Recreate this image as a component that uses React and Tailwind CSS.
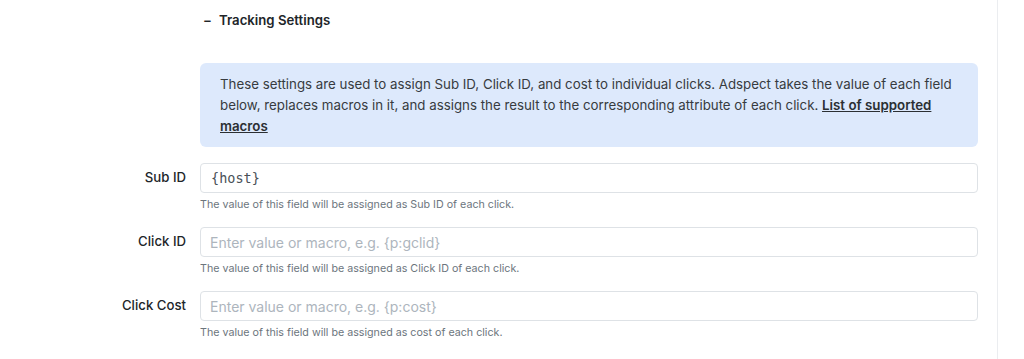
export default function App() {
  const font = { fontFamily: "Inter, 'Noto Sans', sans-serif" };
  const rows = [
    { label: "Sub ID", value: "{host}", placeholder: "", help: "The value of this field will be assigned as Sub ID of each click." },
    { label: "Click ID", value: "", placeholder: "Enter value or macro, e.g. {p:gclid}", help: "The value of this field will be assigned as Click ID of each click." },
    { label: "Click Cost", value: "", placeholder: "Enter value or macro, e.g. {p:cost}", help: "The value of this field will be assigned as cost of each click." },
  ];
  return (
    <div className="w-[1024px] h-[359px] bg-white flex overflow-hidden" style={font}>
      <div className="w-[998px] border-r border-[#ebedf0] pt-[11px]">
        <div className="pl-[203px] flex items-center h-[20px] text-[13.2px] font-semibold text-[#212529]">
          <span className="w-[16px]">−</span>
          <span>Tracking Settings</span>
        </div>
        <div className="ml-[200px] mr-[19px] mt-[32px] bg-[#dde9fc] rounded-[6px] px-[20px] pt-[11px] pb-[10px] text-[13.3px] leading-[21px] text-[#373b40]">
          These settings are used to assign Sub ID, Click ID, and cost to individual clicks. Adspect takes the value of each field below, replaces macros in it, and assigns the result to the corresponding attribute of each click.{" "}
          <a className="underline font-semibold text-[#2b2f33]">List of supported macros</a>
        </div>
        <div className="mt-[16px] flex flex-col gap-[15px] pr-[19px]">
          {rows.map((r) => (
            <div key={r.label} className="grid grid-cols-[186px_1fr] gap-x-[14px]">
              <div className="h-[30px] flex items-center justify-end text-[13.2px] font-medium text-[#212529]">{r.label}</div>
              <div className="flex flex-col">
                <div className="h-[30px] border border-[#dee2e6] rounded-[4px] flex items-center px-[10px] text-[14px]">
                  {r.value ? (
                    <span className="text-[#495057]" style={{ fontFamily: "'DejaVu Sans Mono', monospace", fontSize: "13.5px" }}>{r.value}</span>
                  ) : (
                    <span className="text-[#adb5bd] -ml-[1px]">{r.placeholder}</span>
                  )}
                </div>
                <div className="mt-[4px] text-[10.7px] leading-[15px] text-[#6c757d]">{r.help}</div>
              </div>
            </div>
          ))}
        </div>
      </div>
      <div className="flex-1" />
    </div>
  );
}
